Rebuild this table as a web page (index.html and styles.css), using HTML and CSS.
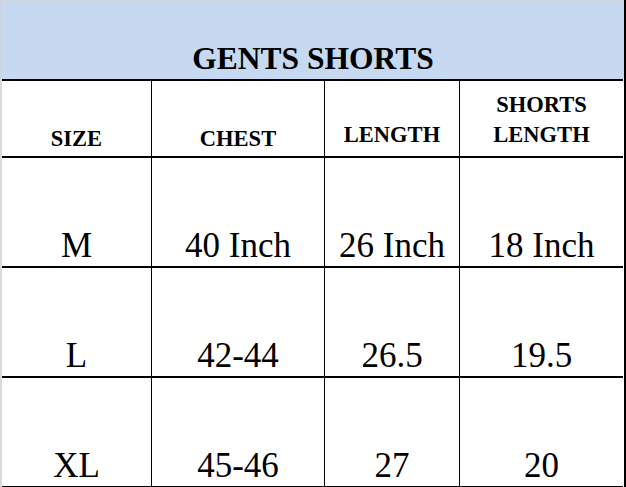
FILE: index.html
```html
<!DOCTYPE html>
<html>
<head>
<meta charset="utf-8">
<link rel="stylesheet" href="styles.css">
</head>
<body>
<div class="sheet">
  <div class="title">GENTS SHORTS</div>
  <div class="table">
    <div class="cell head low first">SIZE</div>
    <div class="cell head low">CHEST</div>
    <div class="cell head high">LENGTH</div>
    <div class="cell head high">SHORTS<br>LENGTH</div>

    <div class="cell data first">M</div>
    <div class="cell data">40 Inch</div>
    <div class="cell data">26 Inch</div>
    <div class="cell data">18 Inch</div>

    <div class="cell data first">L</div>
    <div class="cell data">42-44</div>
    <div class="cell data">26.5</div>
    <div class="cell data">19.5</div>

    <div class="cell data first last">XL</div>
    <div class="cell data last">45-46</div>
    <div class="cell data last">27</div>
    <div class="cell data last">20</div>
  </div>
</div>
</body>
</html>
```
FILE: styles.css
```css
html, body {
  margin: 0;
  padding: 0;
  background: #ffffff;
}

.sheet {
  width: 626px;
  height: 487px;
  box-sizing: border-box;
  border-right: 2px solid #000;
  font-family: "Liberation Serif", "Times New Roman", serif;
  color: #000;
  display: flex;
  flex-direction: column;
}

.title {
  height: 79px;
  box-sizing: border-box;
  background: #c6d9f0;
  border-top: 1px solid #cdd6e1;
  border-left: 2px solid #cbd5e1;
  font-weight: bold;
  font-size: 31.5px;
  line-height: 32px;
  display: flex;
  align-items: flex-end;
  justify-content: center;
  padding: 0 0 4px 0;
}

.table {
  display: grid;
  grid-template-columns: 149px 173px 135px 164px;
  grid-template-rows: 77px 110px 110px 111px;
  border-left: 2px solid #dadada;
}

.cell {
  box-sizing: border-box;
  border-top: 2px solid #000;
  border-left: 1px solid #000;
  display: flex;
  align-items: flex-end;
  justify-content: center;
  text-align: center;
}

.cell.first {
  border-left: none;
}

.cell.last {
  border-bottom: 1px solid #000;
}

.head {
  font-weight: bold;
  font-size: 22.5px;
  line-height: 30px;
}

.head.low {
  padding-bottom: 2px;
}

.head.high {
  padding-bottom: 6px;
}

.data {
  font-size: 35px;
  line-height: 35px;
  padding-bottom: 3px;
}
```
